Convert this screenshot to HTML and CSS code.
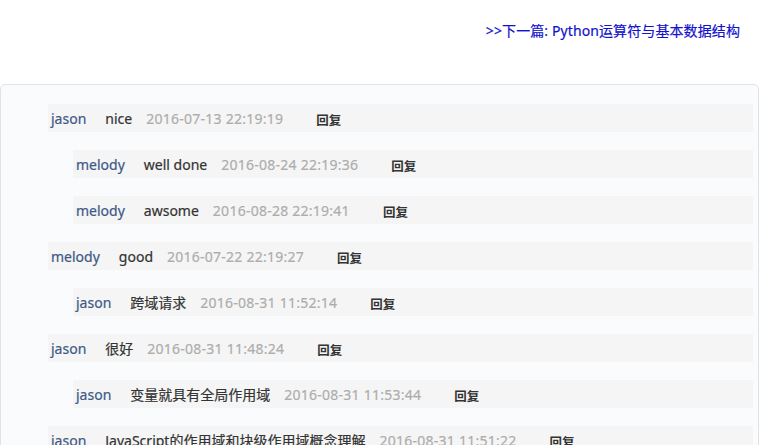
FILE: index.html
```html
<!DOCTYPE html>
<html lang="zh-CN">
<head>
<meta charset="utf-8">
<title>评论</title>
<link rel="stylesheet" href="styles.css">
</head>
<body>
<div class="nav">
  <a class="next" href="#">&gt;&gt;下一篇: Python运算符与基本数据结构</a>
</div>
<div class="comments">
  <div class="row"><span class="name">jason</span><span class="text">nice</span><span class="date">2016-07-13 22:19:19</span><span class="reply">回复</span></div>
  <div class="row sub"><span class="name">melody</span><span class="text">well done</span><span class="date">2016-08-24 22:19:36</span><span class="reply">回复</span></div>
  <div class="row sub"><span class="name">melody</span><span class="text">awsome</span><span class="date">2016-08-28 22:19:41</span><span class="reply">回复</span></div>
  <div class="row"><span class="name">melody</span><span class="text">good</span><span class="date">2016-07-22 22:19:27</span><span class="reply">回复</span></div>
  <div class="row sub"><span class="name">jason</span><span class="text">跨域请求</span><span class="date">2016-08-31 11:52:14</span><span class="reply">回复</span></div>
  <div class="row"><span class="name">jason</span><span class="text">很好</span><span class="date">2016-08-31 11:48:24</span><span class="reply">回复</span></div>
  <div class="row sub"><span class="name">jason</span><span class="text">变量就具有全局作用域</span><span class="date">2016-08-31 11:53:44</span><span class="reply">回复</span></div>
  <div class="row"><span class="name">jason</span><span class="text">JavaScript的作用域和块级作用域概念理解</span><span class="date">2016-08-31 11:51:22</span><span class="reply">回复</span></div>
</div>
</body>
</html>
```
FILE: styles.css
```css
html, body {
  margin: 0;
  padding: 0;
  background: #ffffff;
  font-family: "Noto Sans", "Noto Sans CJK SC", sans-serif;
  font-size: 14px;
  overflow: hidden;
}
.nav {
  height: 84px;
  display: flex;
  justify-content: flex-end;
  padding-right: 22px;
  box-sizing: border-box;
}
.next {
  margin-top: 20px;
  height: 22px;
  line-height: 22px;
  color: #1212cc;
  text-decoration: none;
  font-size: 14px;
  letter-spacing: 0.1px;
  -webkit-text-stroke: 0.2px #1212cc;
}
.comments {
  width: 759px;
  box-sizing: border-box;
  border: 1px solid #dde3e8;
  border-radius: 5px;
  background: #fafbfc;
  padding: 19px 5px 0 47px;
  height: 400px;
}
.row {
  display: flex;
  align-items: center;
  height: 28px;
  margin-bottom: 18px;
  padding-left: 3px;
  background: #f5f5f5;
}
.row.sub {
  margin-left: 25px;
}
.name {
  color: #3d5987;
  margin-right: 19px;
  -webkit-text-stroke: 0.2px #3d5987;
}
.text {
  color: #333333;
  margin-right: 14px;
  -webkit-text-stroke: 0.2px #333333;
}
.date {
  color: #adadad;
  margin-right: 33px;
  letter-spacing: 0.25px;
  -webkit-text-stroke: 0.2px #adadad;
}
.reply {
  color: #333333;
  font-size: 12.5px;
  font-weight: bold;
  padding-top: 2px;
}
```
